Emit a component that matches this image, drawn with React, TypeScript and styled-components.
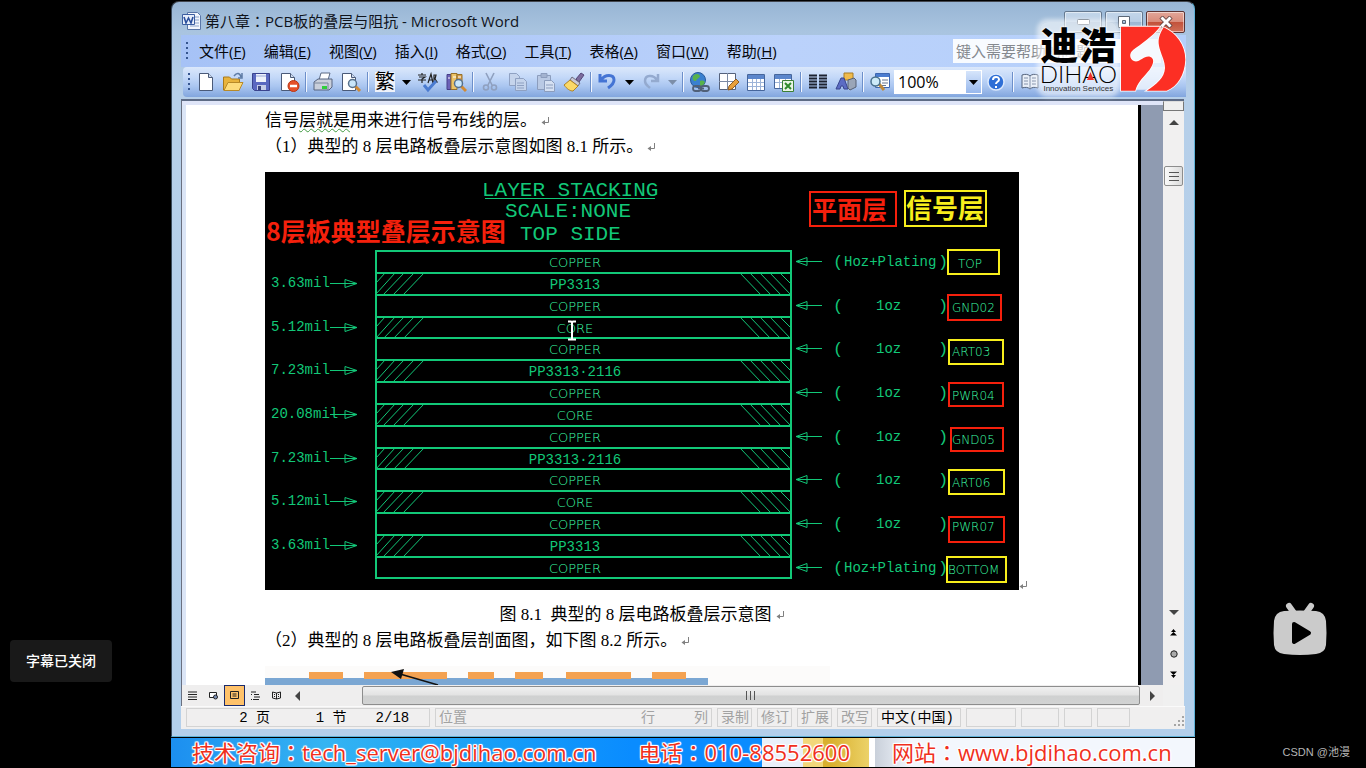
import React from 'react';
import styled, { createGlobalStyle, css } from 'styled-components';

const GREEN = '#12c878';
const BRIGHT = '#3dffa8';
const RED = '#f5200c';
const YELLOW = '#f7ee1c';
const ui = '"Open Sans", "Noto Sans CJK SC", sans-serif';
const serif = '"Liberation Serif", "Noto Sans CJK SC", serif';
const mono = '"Liberation Mono", "Noto Sans CJK SC", monospace';

const GlobalStyle = createGlobalStyle`
  *, *::before, *::after { box-sizing: border-box; }
  body { margin: 0; background: #000; font-family: ${ui}; }
  button, input, select { font-family: inherit; border-radius: 0; }
  p, h1 { margin: 0; font-weight: 400; }
`;

const Player = styled.div`
  display: grid;
  grid-template-columns: 171px minmax(0, 1fr) 171px;
  min-height: 100vh;
`;

const LeftSide = styled.aside`
  display: flex;
  flex-direction: column;
  justify-content: flex-end;
  align-items: flex-start;
  padding: 0 0 86px 10px;
`;

const Notice = styled.p`
  padding: 0 16px;
  line-height: 42px;
  font-size: 14px;
  font-weight: 500;
  color: #fff;
  background: #191919;
  border-radius: 4px;
`;

const RightSide = styled.aside`
  display: flex;
  flex-direction: column;
  justify-content: flex-end;
  align-items: flex-end;
  gap: 86px;
  padding: 0 16px 6px 0;
`;

const TvButton = styled.button`
  display: block;
  margin-right: 22px;
  padding: 0;
  border: 0;
  background: none;
  svg { display: block; }
`;

const Credit = styled.p`
  font-family: "Liberation Sans", "Noto Sans CJK SC", sans-serif;
  font-size: 11px;
  line-height: 20px;
  color: #b4b4b4;
`;

const Stage = styled.main`
  display: flex;
  flex-direction: column;
  padding: 1px 0;
`;

const Window = styled.section`
  position: relative;
  flex: 1;
  display: flex;
  flex-direction: column;
  margin-bottom: 1px;
  padding: 0 8px 7px 9px;
  border: 1px solid #5fb2d8;
  border-left-color: #3a4a5c;
  border-top-color: #42464e;
  border-radius: 8px 8px 0 0;
  background: linear-gradient(#98b5d4 0, #a9c4e0 30px, #b6cfe9 90px, #b3cfeb 100%);
`;

const TitleBar = styled.header`
  display: flex;
  align-items: center;
  gap: 3px;
  height: 33px;
  padding: 5px 1px 0 1px;
`;

const Title = styled.h1`
  flex: 1;
  font-size: 15px;
  line-height: 22px;
  color: #10141c;
`;

const Colon = styled.span`
  font-family: "Noto Sans CJK TC", sans-serif;
`;

const CaptionButton = styled.button<{ $close?: boolean }>`
  display: flex;
  align-items: center;
  justify-content: center;
  align-self: flex-start;
  width: ${p => (p.$close ? 39 : 38)}px;
  height: 22px;
  margin-top: 4px;
  padding: 0;
  border: 1px solid ${p => (p.$close ? '#5c3434' : '#64788f')};
  border-radius: 2px;
  box-shadow: inset 0 0 0 1px rgba(255, 255, 255, 0.5);
  background: ${p =>
    p.$close
      ? 'linear-gradient(#e2a699 0, #d98c7b 48%, #c2513a 50%, #cf6f58 100%)'
      : 'linear-gradient(#c3d6ea 0, #b8cde4 48%, #9cb6d2 50%, #aec6df 100%)'};
`;

const MenuBar = styled.nav`
  display: flex;
  align-items: center;
  gap: 2px;
  height: 32px;
  padding: 0 0 0 5px;
  background: linear-gradient(90deg, #a6c2f6, #bbd2fb 60%, #b4cffa);
`;

const Grip = styled.span`
  flex: none;
  width: 2px;
  height: 18px;
  margin-right: 1px;
  background: repeating-linear-gradient(#35558f 0 2px, transparent 2px 5px);
`;

const MenuItem = styled.button`
  padding: 0 8px;
  border: 0;
  background: none;
  font-size: 15px;
  line-height: 24px;
  white-space: nowrap;
  color: #05070c;
`;

const HelpBox = styled.input`
  width: 208px;
  height: 24px;
  margin: 0 25px 0 auto;
  padding: 0 3px;
  border: 0;
  background: #f8fbff;
  font-size: 15px;
  &::placeholder { color: #85898f; opacity: 1; }
`;

const ToolBar = styled.div`
  display: flex;
  align-items: center;
  height: 30px;
  padding: 0 0 0 5px;
  margin-left: 2px;
  border-radius: 4px 0 0 4px;
  background: linear-gradient(#dbe8fb 0, #c3d8f8 35%, #a9c5f0 65%, #82a6de 100%);
`;

const Tool = styled.button<{ $narrow?: boolean }>`
  display: flex;
  flex: none;
  align-items: center;
  justify-content: center;
  width: ${p => (p.$narrow ? 15 : 28)}px;
  height: 28px;
  padding: 0;
  border: 0;
  background: none;
`;

const Traditional = styled.span`
  width: 20px;
  font-size: 20px;
  line-height: 20px;
  background: #eef2fa;
  color: #000;
`;

const Separator = styled.span`
  flex: none;
  width: 2px;
  height: 20px;
  margin: 0 2px;
  border-left: 1px solid #6c8fca;
  border-right: 1px solid #f2f7ff;
`;

const Zoom = styled.div`
  display: flex;
  flex: none;
  width: 88px;
  height: 24px;
  border: 1px solid #fff;
  background: #fff;
`;

const ZoomSelect = styled.select`
  flex: 1;
  padding: 0 3px;
  border: 0;
  appearance: none;
  background: #fff;
  color: #000;
  font-size: 16px;
  line-height: 22px;
`;

const ZoomArrow = styled.span`
  display: flex;
  align-items: center;
  justify-content: center;
  width: 15px;
  background: linear-gradient(#d6e5fb, #98b8ec);
`;

const Workspace = styled.div`
  flex: 1;
  display: grid;
  grid-template-columns: minmax(0, 1fr) 21px;
  grid-template-rows: minmax(0, 1fr) 21px;
  margin: 2px 2px 0 0;
  border-top: 2px solid #5d6b85;
  border-left: 1px solid #6a7080;
  background: #f0f0f0;
`;

const Desk = styled.div`
  padding: 4px 22px 0 4px;
  overflow: hidden;
  background: linear-gradient(#dfe5f8 0 4px, transparent 4px),
    linear-gradient(90deg, #dbe5f6 0 4px, #8f9bb1 4px);
`;

const Page = styled.article`
  height: 100%;
  padding: 3px 119px 0 79px;
  border-right: 3px solid #000;
  background: #fff;
  overflow: hidden;
`;

const Line = styled.p<{ $center?: boolean }>`
  font-family: ${serif};
  font-size: 17px;
  line-height: 26px;
  color: #000;
  white-space: nowrap;
  text-align: ${p => (p.$center ? 'center' : 'left')};
  svg { margin-left: 4px; }
`;

const Wavy = styled.span`
  text-decoration: underline wavy #3f9a3f 1px;
  text-underline-offset: 2px;
`;

const Figure = styled.figure`
  display: flex;
  align-items: flex-end;
  margin: 12px -12px 12px 0;
  svg { flex: none; display: block; }
`;

const Section = styled.div`
  margin-top: 12px;
  svg { display: block; }
`;

const VBar = styled.div`
  display: flex;
  flex-direction: column;
  align-items: center;
  background: #f1f0f0;
`;

const VSplit = styled.div`
  width: 21px;
  height: 10px;
  border: 1px solid #777;
  border-top-color: #ddd;
  background: #efefef;
`;

const BarButton = styled.button<{ $h?: number; $w?: number; $on?: boolean }>`
  display: flex;
  flex: none;
  align-items: center;
  justify-content: center;
  width: ${p => p.$w || 21}px;
  height: ${p => p.$h || 21}px;
  padding: 0;
  border: ${p => (p.$on ? '1px solid #1a2a6c' : '0')};
  background: ${p => (p.$on ? '#ffc26a' : 'none')};
`;

const VThumb = styled.div`
  display: flex;
  align-items: center;
  justify-content: center;
  width: 19px;
  height: 20px;
  margin: 31px 0 auto;
  border: 1px solid #8d8d8d;
  border-radius: 2px;
  background: linear-gradient(90deg, #fafafa, #dcdcdc);
`;

const HBar = styled.div`
  display: flex;
  align-items: center;
  background: #efeeee;
`;

const HThumb = styled.div`
  flex: 1;
  display: flex;
  align-items: center;
  justify-content: center;
  height: 19px;
  margin-left: 54px;
  border: 1px solid #8d8d8d;
  border-radius: 2px;
  background: linear-gradient(#f0f0f0 0, #e2e2e2 48%, #cfd0d0 52%, #d2d3d3 100%);
`;

const Status = styled.footer`
  display: flex;
  align-items: center;
  gap: 5px;
  height: 23px;
  margin-right: 1px;
  padding: 1px 0 2px 5px;
  border-top: 1px solid #fafafa;
  background: #f0efef;
  font-family: ${mono};
  font-size: 14px;
  line-height: 18px;
`;

const Cell = styled.div<{ $w?: number; $dim?: boolean; $gap?: number; $end?: boolean }>`
  display: flex;
  align-items: center;
  gap: ${p => p.$gap || 0}px;
  height: 19px;
  white-space: nowrap;
  border: 1px solid #d3d3d3;
  color: ${p => (p.$dim ? '#a2a2a2' : '#000')};
  padding: 0 3px;
  ${p => (p.$w ? css`flex: none; width: ${p.$w}px;` : css`flex: 1;`)}
  ${p => p.$end && css`justify-content: flex-end;`}
`;

const Push = styled.span`
  margin-left: auto;
`;

const ResizeCorner = styled.span`
  flex: none;
  display: flex;
  width: 50px;
  align-self: flex-end;
  justify-content: flex-end;
`;

const Banner = styled.div`
  display: flex;
  align-items: flex-start;
  gap: 42px;
  height: 29px;
  padding-left: 21px;
  white-space: nowrap;
  font-size: 22px;
  line-height: 26px;
  color: #f0301c;
  text-shadow: 1px 0 #fff, -1px 0 #fff, 0 1px #fff, 0 -1px #fff, 1px 1px 1px #fff, -1px -1px 1px #fff,
    1px -1px 1px #fff, -1px 1px 1px #fff;
  background:
    linear-gradient(90deg, transparent 0 591px, #e9f0fa 591px 632px, #f2d77a 632px 652px, #d9b02e 652px 660px, #ecd268 698px, #fff 698px 704px, #c9d0da 704px, #f3f7fd 740px),
    linear-gradient(90deg, #1c8ff0, #35b4f2 15%, #18a0f6 30%, #0a8cff 45%);
`;

const Logo = styled.div`
  position: absolute;
  z-index: 2;
  top: 20px;
  right: 8px;
  display: flex;
  align-items: flex-start;
  gap: 3px;
  svg { display: block; }
`;

const LogoWords = styled.div`
  display: flex;
  flex-direction: column;
  align-items: center;
  color: #000;
  border-radius: 8px;
  background: rgba(255, 255, 255, 0.55);
  box-shadow: 0 0 4px 3px rgba(255, 255, 255, 0.55);
  white-space: nowrap;
`;

const LogoName = styled.span`
  font: 900 38px/42px "Noto Sans CJK SC", sans-serif;
  text-shadow: 0 0 2px #fff, 0 0 3px #fff;
`;

const LogoLatin = styled.span`
  display: flex;
  align-items: center;
  font: 300 24px/20px Lato, sans-serif;
`;

const LogoA = styled.span`
  position: relative;
  svg { position: absolute; left: 5px; bottom: 4px; }
`;

const LogoTag = styled.span`
  font: 400 8px/10px "Liberation Sans", sans-serif;
  color: #333;
`;

/* ---------- small glyphs ---------- */

const Caret = ({ color = '#000' }: { color?: string }) => (
  <svg width="9" height="5" viewBox="0 0 9 5"><path d="M0 0h9L4.500 5z" fill={color} /></svg>
);

const Triangle = ({ dir }: { dir: 'up' | 'down' | 'left' | 'right' }) => {
  const d = { up: 'M0 7L5 2l5 5z', down: 'M0 3l5 5 5-5z', left: 'M7 0L2 5l5 5z', right: 'M3 0l5 5-5 5z' }[dir];
  return <svg width="10" height="10" viewBox="0 0 10 10"><path d={d} fill="#444" /></svg>;
};

const Return = () => (
  <svg width="9" height="9" viewBox="0 0 9 9" fill="none" stroke="#808080">
    <path d="M7.500 0v5.500H2" /><path d="M4 3v5L0.500 5.500z" fill="#808080" stroke="none" />
  </svg>
);

const Sheet = ({ x = 5, y = 2 }: { x?: number; y?: number }) => (
  <g transform={`translate(${x} ${y})`}>
    <path d="M.5.5h9l4 4v13H.5z" fill="#fff" stroke="#4a5a78" />
    <path d="M9.500.5v4h4" fill="#cfdcf0" stroke="#4a5a78" />
  </g>
);

const Lens = ({ x, y }: { x: number; y: number }) => (
  <g transform={`translate(${x} ${y})`}>
    <path d="M7 7l5 5" stroke="#d08a35" strokeWidth="3" />
    <circle cx="4.500" cy="4.500" r="4" fill="#c9e6fa" stroke="#56708c" strokeWidth="1.500" />
  </g>
);

const icons: Record<string, React.ReactNode> = {
  new: <Sheet />,
  open: <>
    <path d="M1.500 19V6h6l2 2h8v11z" fill="#e8b33c" stroke="#a87a1c" />
    <path d="M2 19.500l4-8h15l-4 8z" fill="#fddc7c" stroke="#b88a28" />
    <path d="M12 5c3-4 6-3 7 1M20 2v5h-4" fill="none" stroke="#5d7ba5" strokeWidth="1.500" />
  </>,
  save: <>
    <path d="M2.500 2.500h17v17h-15l-2-2z" fill="#5a68c0" stroke="#3a448e" />
    <path d="M6 3h10v8H6z" fill="#eef2fb" /><path d="M6 5h10" stroke="#9aa8d8" />
    <path d="M7 14h9v5H7z" fill="#c6cde8" /><path d="M8 15h3v4H8z" fill="#39437e" />
  </>,
  permission: <>
    <Sheet x={3} />
    <circle cx="15.500" cy="15" r="5.500" fill="#e5502a" stroke="#b93614" />
    <path d="M12 15h7" stroke="#fff" strokeWidth="2.500" />
  </>,
  print: <>
    <path d="M7 9l2-7h9l-2 7z" fill="#fff" stroke="#5c6a84" />
    <path d="M2 11l4-3h14v8l-3 3H2z" fill="#c9cfdb" stroke="#566480" />
    <path d="M2 12h14v7" fill="none" stroke="#7b879c" />
    <path d="M10 15h5v3h-5z" fill="#2fcf3a" />
  </>,
  preview: <><Sheet x={2} /><Lens x={8} y={8} /></>,
  spelling: <>
    <path d="M1 4h8M5 2v2M2 6h6L5 8v4M1 9h8M11 12l3-9 2 9M12 9h4M17 11V4h2l-1 4 2 3z" fill="none" stroke="#222" strokeWidth="1.200" />
    <path d="M7 14l4 5 8-9" fill="none" stroke="#4a7bd0" strokeWidth="3" />
  </>,
  research: <>
    <path d="M2 3.500h4v15H2z" fill="#6c62b8" stroke="#463e88" /><path d="M6 2.500h6v16H6z" fill="#ecc368" stroke="#94702a" />
    <path d="M12 3.500h5v8h-5z" fill="#d9a04c" stroke="#94702a" /><path d="M3 7h2M8 6h3M13 6h3" stroke="#fff" />
    <Lens x={9} y={8} />
  </>,
  cut: <g fill="none" stroke="#8fa0bf" strokeWidth="1.600">
    <path d="M7 2l6 12M15 2L9 14" /><circle cx="7" cy="16.500" r="2.500" /><circle cx="15" cy="16.500" r="2.500" />
  </g>,
  copy: <g fill="#c5d4ec" stroke="#8fa1c2">
    <path d="M2.500 2.500h7l3 3v9h-10z" /><path d="M8.500 7.500h8l3 3v9h-11z" /><path d="M10 12h7M10 14.500h7M10 17h7" />
  </g>,
  paste: <g fill="#b9c9e4" stroke="#8c9dbd">
    <path d="M2.500 4.500h13v14h-13z" /><path d="M6 2.500h6v4H6z" fill="#a3b3d0" /><path d="M9.500 9.500h7l3 3v8h-10z" fill="#d5e0f2" />
    <path d="M11 14h7M11 17h7" />
  </g>,
  brush: <>
    <path d="M13 8l5-6 3 2-5 7z" fill="#7c6c9c" stroke="#55487a" />
    <path d="M9 6l8 6-2 3-8-6z" fill="#c9c9d6" stroke="#6e6e80" />
    <path d="M7 9l8 6-5 5c-3 0-6-2-9-6z" fill="#fbd968" stroke="#b08324" />
  </>,
  undo: <path d="M3 3v7h7M4 9c4-6 13-6 13 0 0 4-3 6-6 8" fill="none" stroke="#4474d4" strokeWidth="3" />,
  redo: <path d="M18 3v7h-7M17 9C13 3 5 4 5 10c0 4 3 5 5 7" fill="none" stroke="#94aacf" strokeWidth="2.500" />,
  globe: <>
    <circle cx="9" cy="9" r="7.500" fill="#3a80cf" stroke="#285a9c" />
    <path d="M4 5c3-3 6-2 7 0-1 3-3 2-4 5-3 0-4-2-3-5zM11 10c3-1 4 0 5 1-1 3-3 4-5 5z" fill="#58b24c" />
    <g fill="none" stroke="#506078" strokeWidth="1.800"><rect x="4" y="15" width="8" height="5" rx="2.500" /><rect x="12" y="15" width="8" height="5" rx="2.500" /><path d="M9 17.500h6" /></g>
  </>,
  drawTable: <>
    <path d="M2.500 2.500h16v16h-16z" fill="#fff" stroke="#55627c" /><path d="M2 10.500h17M10.500 2v17" stroke="#7c8aa4" />
    <path d="M11 19l1-4 7-7 3 3-7 7z" fill="#e8a03c" stroke="#905c20" />
  </>,
  table: <>
    <path d="M2.500 3.500h17v16h-17z" fill="#fff" stroke="#46669c" /><path d="M3 4h16v4H3z" fill="#5b86cc" />
    <path d="M3 11.500h16M3 15.500h16M7.500 8v11M11.500 8v11M15.500 8v11" stroke="#9db4d8" />
  </>,
  excel: <>
    <path d="M1.500 3.500h17v14h-17z" fill="#fff" stroke="#46669c" /><path d="M2 4h16v4H2z" fill="#5b86cc" />
    <path d="M2 11.500h16M6.500 8v9M12.500 8v9" stroke="#9db4d8" />
    <path d="M9.500 9.500h11v11h-11z" fill="#eaf5e6" stroke="#3b7f35" /><path d="M12 12l6 6M18 12l-6 6" stroke="#2f8a2c" strokeWidth="2" />
  </>,
  columns: <path d="M2 4.500h8M2 7.500h8M2 10.500h8M2 13.500h8M2 16.500h8M12 4.500h8M12 7.500h8M12 10.500h8M12 13.500h8M12 16.500h8" stroke="#1c2230" strokeWidth="2" />,
  drawing: <>
    <path d="M9 2h9v7H9z" fill="#f0bb4c" stroke="#a87c24" />
    <path d="M1 18L6 7h3l4 11h-4l-1-3H6l-1 3z" fill="#5c6cc4" stroke="#39458e" />
    <path d="M13 9l6-2 2 2v7l-6 3-2-2z" fill="#9aa5b7" stroke="#566074" />
  </>,
  docmap: <>
    <path d="M6.500 2.500h14v14h-14z" fill="#fff" stroke="#3d66b0" /><path d="M7 3h13v3H7z" fill="#4b7cd0" />
    <path d="M13 9h6M13 12h6M13 14.500h4" stroke="#66758e" />
    <path d="M10 13l5 6" stroke="#c08a3a" strokeWidth="3" /><circle cx="6.500" cy="10.500" r="4.500" fill="#cdeaf8" stroke="#48708c" strokeWidth="1.500" />
  </>,
  help: <>
    <circle cx="11" cy="11" r="8" fill="#2f6fd6" stroke="#dce9fc" strokeWidth="1.500" />
    <path d="M8 9c0-4 6-4 6-.5 0 2.500-3 2-3 4.500M11 15v2" fill="none" stroke="#fff" strokeWidth="2" />
  </>,
  read: <>
    <path d="M3 4c3-1 6-1 8 1 2-2 5-2 8-1v13c-3-1-6-1-8 1-2-2-5-2-8-1z" fill="#e9eff8" stroke="#53627c" />
    <path d="M11 5v13M5 7h4M5 10h4M5 13h4M13 7h4M13 10h4M13 13h4" stroke="#8492aa" />
  </>,
};

const Icon = ({ name }: { name: string }) => (
  <svg width="22" height="22" viewBox="0 0 22 22" aria-hidden="true">{icons[name]}</svg>
);

const tools = [
  'new:新建', 'open:打开', 'save:保存', 'permission:权限', '|', 'print:打印', 'preview:打印预览', '|', 'trad:繁', 'v',
  'spelling:拼写', 'research:信息检索', '|', 'cut:剪切', 'copy:复制', 'paste:粘贴', 'brush:格式刷', '|', 'undo:撤消', 'v',
  'redo:恢复', 'dim', '|', 'globe:超链接', 'drawTable:表格和边框', 'table:插入表格', 'excel:插入工作表', '|',
  'columns:分栏', 'drawing:绘图', '|', 'docmap:文档结构图',
];

const menus: [string, string][] = [
  ['文件', 'F'], ['编辑', 'E'], ['视图', 'V'], ['插入', 'I'], ['格式', 'O'], ['工具', 'T'], ['表格', 'A'], ['窗口', 'W'], ['帮助', 'H'],
];

/* ---------- layer stacking drawing ---------- */

const layers = [
  'COPPER', 'PP3313', 'COPPER', 'CORE', 'COPPER', 'PP3313·2116', 'COPPER', 'CORE', 'COPPER', 'PP3313·2116',
  'COPPER', 'CORE', 'COPPER', 'PP3313', 'COPPER',
];
const thickness = ['3.63mil', '5.12mil', '7.23mil', '20.08mil', '7.23mil', '5.12mil', '3.63mil'];
const nets = [
  { name: 'TOP', signal: true, x: 683, y: 78, w: 51, h: 24, tx: 693, ty: 96 },
  { name: 'GND02', signal: false, x: 683, y: 123, w: 53, h: 25, tx: 687, ty: 140 },
  { name: 'ART03', signal: true, x: 684, y: 168, w: 54, h: 24, tx: 687, ty: 184 },
  { name: 'PWR04', signal: false, x: 684, y: 211, w: 54, h: 23, tx: 687, ty: 228 },
  { name: 'GND05', signal: false, x: 686, y: 256, w: 52, h: 23, tx: 687, ty: 272 },
  { name: 'ART06', signal: true, x: 684, y: 298, w: 55, h: 24, tx: 687, ty: 315 },
  { name: 'PWR07', signal: false, x: 684, y: 345, w: 55, h: 25, tx: 687, ty: 359 },
  { name: 'BOTTOM', signal: true, x: 682, y: 385, w: 59, h: 25, tx: 683, ty: 402 },
];
const rowY = (i: number) => 79 + Math.round((i * 655) / 30);

const Cad = styled.text<{ $size: number; $mono?: boolean }>`
  font-family: ${p => (p.$mono ? '"Liberation Mono", monospace' : '"DejaVu Sans", sans-serif')};
  font-weight: 200;
  font-size: ${p => p.$size}px;
  fill: ${p => (p.$mono ? GREEN : BRIGHT)};
  white-space: pre;
`;

const Mark = styled.text<{ $signal?: boolean; $size: number }>`
  font: 700 ${p => p.$size}px "Noto Sans CJK SC", sans-serif;
  fill: ${p => (p.$signal ? YELLOW : RED)};
`;

const StackDrawing = () => (
  <svg width="754" height="418" viewBox="0 0 754 418" role="img" aria-label="8层板典型叠层示意图">
    <rect width="754" height="418" fill="#000" />
    <Cad $mono $size={21} x="217" y="24">LAYER STACKING</Cad>
    <path d="M220 26.500h170" stroke={GREEN} />
    <Cad $mono $size={21} x="240" y="45">SCALE:NONE</Cad>
    <Cad $mono $size={21} x="255" y="68">TOP SIDE</Cad>
    <Mark $size={25} x="1" y="69">8层板典型叠层示意图</Mark>
    <g fill="none" strokeWidth="2">
      <rect x="545" y="20" width="86" height="34" stroke={RED} />
      <rect x="640" y="19" width="81" height="35" stroke={YELLOW} />
    </g>
    <Mark $size={25} x="547" y="47">平面层</Mark>
    <Mark $size={26} $signal x="641" y="46">信号层</Mark>
    <g fill="none" stroke={GREEN}>
      <rect x="111" y="79" width="415" height="327" strokeWidth="2" />
      {layers.map((_, i) => i > 0 && <path key={i} d={`M111 ${rowY(i)}h415`} strokeWidth="2" />)}
      {[1, 3, 5, 7, 9, 11, 13].map(i => {
        const y = rowY(i);
        return (
          <g key={i}>
            <path d={`M120 ${y}l-9 10M130 ${y}l-19 21M139 ${y}l-21 22M149 ${y}l-21 22M159 ${y}l-21 22`} />
            <path d={`M475 ${y}l21 22M485 ${y}l21 22M495 ${y}l21 22M505 ${y}l21 22M515 ${y}l11 11`} />
            <path d={`M65 ${y + 10.5}h27M80 ${y + 6.5}v8l12 -4z`} />
          </g>
        );
      })}
      {nets.map((n, i) => {
        const y = rowY(i * 2) + 10.5;
        return <path key={n.name} d={`M531 ${y}h26M542 ${y - 4}v8l-11 -4z`} />;
      })}
    </g>
    {layers.map((label, i) => (
      <Cad key={i} $size={label[0] === 'C' ? 13 : 14} $mono={label[0] === 'P'} x="310" y={rowY(i) + 16} textAnchor="middle">{label}</Cad>
    ))}
    {thickness.map((t, i) => (
      <Cad key={i} $mono $size={14} x="6" y={rowY(i * 2 + 1) + 14}>{t}</Cad>
    ))}
    {nets.map((n, i) => {
      const y = rowY(i * 2) + 15;
      const outer = i === 0 || i === nets.length - 1;
      return (
        <g key={n.name}>
          <Cad $mono $size={17} x="568" y={y + 1}>(</Cad>
          <Cad $mono $size={14} x={outer ? 579 : 611} y={y}>{outer ? 'Hoz+Plating' : '1oz'}</Cad>
          <Cad $mono $size={17} x="673" y={y + 1}>)</Cad>
          <rect x={n.x} y={n.y} width={n.w} height={n.h} fill="none" strokeWidth="2" stroke={n.signal ? YELLOW : RED} />
          <Cad $size={12} x={n.tx} y={n.ty}>{n.name}</Cad>
        </g>
      );
    })}
    <path d="M303 149.500h3l1 1 1 -1h3M307 150v17M303 167.500h8" fill="none" stroke="#fff" strokeWidth="2" />
  </svg>
);

const SectionDrawing = () => (
  <svg width="565" height="19" viewBox="0 0 565 19" role="img" aria-label="剖面图">
    <rect width="565" height="19" fill="#fcfbfa" />
    <rect y="12" width="443" height="7" fill="#7ba7d3" />
    {[[44, 34], [99, 83], [203, 26], [250, 28], [301, 65], [387, 34]].map(([x, w]) => (
      <rect key={x} x={x} y="6" width={w} height="7" fill="#f4a251" />
    ))}
    <path d="M135 8l38 11" stroke="#111" strokeWidth="1.500" />
    <path d="M126 6l13 -3-3 10z" fill="#111" />
  </svg>
);

const WordIcon = () => (
  <svg width="20" height="20" viewBox="0 0 20 20" aria-hidden="true">
    <path d="M5.500 1.500h10l3 3v14h-13z" fill="#f2f6fd" stroke="#5a76a8" />
    <path d="M13 6h4M13 9h4M13 12h4M8 15h9" stroke="#8ba2c8" />
    <path d="M.5 3.500h12v10H.5z" fill="#e8effb" stroke="#3c5ea0" />
    <path d="M2 6l2 6 2.500-5L9 12l2-6" fill="none" stroke="#2a4f9c" strokeWidth="1.600" />
  </svg>
);

const App = () => (
  <>
    <GlobalStyle />
    <Player>
      <LeftSide><Notice>字幕已关闭</Notice></LeftSide>
      <Stage>
        <Window>
          <TitleBar>
            <WordIcon />
            <Title>第八章<Colon>：</Colon>PCB板的叠层与阻抗 - Microsoft Word</Title>
            <CaptionButton aria-label="最小化">
              <svg width="13" height="6" viewBox="0 0 13 6"><rect x=".5" y=".5" width="12" height="5" rx="1" fill="#fff" stroke="#5b6776" /></svg>
            </CaptionButton>
            <CaptionButton aria-label="最大化">
              <svg width="12" height="12" viewBox="0 0 12 12"><path d="M.5.500h11v11H.5zM4.500 4.500h3v3h-3z" fill="#fff" fillRule="evenodd" stroke="#5b6776" /></svg>
            </CaptionButton>
            <CaptionButton $close aria-label="关闭">
              <svg width="14" height="12" viewBox="0 0 14 12"><path d="M2 1l10 10M12 1L2 11" stroke="#5c4040" strokeWidth="4.500" /><path d="M2.500 1.500l9 9M11.500 1.500l-9 9" stroke="#fff" strokeWidth="3" /></svg>
            </CaptionButton>
          </TitleBar>
          <MenuBar>
            <Grip />
            {menus.map(([name, key]) => <MenuItem key={key}>{name}(<u>{key}</u>)</MenuItem>)}
            <HelpBox aria-label="帮助" placeholder="键入需要帮助的问题" />
          </MenuBar>
          <ToolBar>
            <Grip />
            {tools.map((t, i) => {
              if (t === '|') return <Separator key={i} />;
              if (t === 'v' || t === 'dim') return <Tool key={i} $narrow aria-label="更多"><Caret color={t === 'dim' ? '#7c8ea8' : '#000'} /></Tool>;
              const [name, label] = t.split(':');
              return <Tool key={i} aria-label={label}>{name === 'trad' ? <Traditional>繁</Traditional> : <Icon name={name} />}</Tool>;
            })}
            <Zoom>
              <ZoomSelect aria-label="显示比例" defaultValue="100%"><option>100%</option></ZoomSelect>
              <ZoomArrow><Caret /></ZoomArrow>
            </Zoom>
            <Tool aria-label="帮助"><Icon name="help" /></Tool>
            <Separator />
            <Tool aria-label="阅读"><Icon name="read" /></Tool>
          </ToolBar>
          <Workspace>
            <Desk>
              <Page>
                <Line>信号<Wavy>层就是</Wavy>用来进行信号布线的层。<Return /></Line>
                <Line>（1）典型的 8 层电路板叠层示意图如图 8.1 所示。<Return /></Line>
                <Figure><StackDrawing /><Return /></Figure>
                <Line $center>图 8.1&nbsp; 典型的 8 层电路板叠层示意图<Return /></Line>
                <Line>（2）典型的 8 层电路板叠层剖面图，如下图 8.2 所示。<Return /></Line>
                <Section><SectionDrawing /></Section>
              </Page>
            </Desk>
            <VBar>
              <VSplit />
              <BarButton $h={24} aria-label="向上滚动"><Triangle dir="up" /></BarButton>
              <VThumb><svg width="10" height="9" viewBox="0 0 10 9"><path d="M0 .5h10M0 4.500h10M0 8.500h10" stroke="#555" /></svg></VThumb>
              <BarButton aria-label="向下滚动"><Triangle dir="down" /></BarButton>
              <BarButton aria-label="前一页"><svg width="7" height="7" viewBox="0 0 7 7"><path d="M3.500 0L6 3H1zM3.500 3L7 6.500H0z" /></svg></BarButton>
              <BarButton aria-label="选择浏览对象"><svg width="8" height="8" viewBox="0 0 8 8"><circle cx="4" cy="4" r="3.200" fill="#aaa" stroke="#222" /></svg></BarButton>
              <BarButton aria-label="下一页"><svg width="7" height="7" viewBox="0 0 7 7"><path d="M0 .5h7L3.500 4zM1 4h5L3.500 7z" /></svg></BarButton>
            </VBar>
            <HBar>
              <BarButton aria-label="普通视图"><svg width="9" height="9" viewBox="0 0 9 9"><path d="M0 1h9M0 3.500h9M0 6h9M0 8.500h9" stroke="#222" /></svg></BarButton>
              <BarButton aria-label="Web 版式视图"><svg width="9" height="9" viewBox="0 0 9 9"><path d="M.5 1.500h7v5h-7z" fill="#fff" stroke="#222" /><circle cx="6.500" cy="6" r="2" fill="#7d90b8" stroke="#222" /></svg></BarButton>
              <BarButton $on aria-label="页面视图"><svg width="9" height="9" viewBox="0 0 9 9"><path d="M.5.500h8v7h-8zM2.500 3h4M2.500 5h4" fill="none" stroke="#222" /></svg></BarButton>
              <BarButton aria-label="大纲视图"><svg width="9" height="9" viewBox="0 0 9 9"><path d="M0 1h5M3 3.500h5M3 6h6M2 8.500h6M0 3.500h1M0 8.500h1" stroke="#222" /></svg></BarButton>
              <BarButton aria-label="阅读版式"><svg width="9" height="9" viewBox="0 0 9 9"><path d="M.5 1l4 1 4-1v6l-4 1-4-1zM4.500 2v6M2 3.500h1M2 5.500h1M6 3.500h1M6 5.500h1" fill="none" stroke="#222" /></svg></BarButton>
              <BarButton aria-label="向左滚动"><Triangle dir="left" /></BarButton>
              <HThumb><svg width="10" height="9" viewBox="0 0 10 9"><path d="M.5 0v9M4.500 0v9M8.500 0v9" stroke="#555" /></svg></HThumb>
              <BarButton $w={23} aria-label="向右滚动"><Triangle dir="right" /></BarButton>
            </HBar>
          </Workspace>
          <Status>
            <Cell $w={244} $end $gap={29}>
              <span>2 页</span><span>&nbsp; 1 节</span><span>2/18 &nbsp;</span>
            </Cell>
            <Cell $dim $gap={39}><span>位置</span><Push>行</Push><span>列</span></Cell>
            {['录制', '修订', '扩展', '改写'].map(s => <Cell key={s} $dim $w={35}>{s}</Cell>)}
            <Cell $w={84}>中文(中国)</Cell>
            <Cell $w={50} /><Cell $w={38} /><Cell $w={28} /><Cell $w={33} />
            <ResizeCorner>
              <svg width="11" height="11" viewBox="0 0 11 11"><path d="M8 0h2v2H8zM8 4h2v2H8zM8 8h2v2H8zM4 4h2v2H4zM4 8h2v2H4zM0 8h2v2H0z" fill="#a5a5a5" /></svg>
            </ResizeCorner>
          </Status>
          <Logo>
            <LogoWords>
              <LogoName>迪浩</LogoName>
              <LogoLatin>
                DIH
                <LogoA>
                  A
                  <svg width="7" height="8" viewBox="0 0 7 8" aria-hidden="true"><path d="M3.500 0L7 8H0z" fill="#f03028" /></svg>
                </LogoA>
                O
              </LogoLatin>
              <LogoTag>Innovation Services</LogoTag>
            </LogoWords>
            <svg width="66" height="72" viewBox="32 12 198 216" aria-hidden="true">
              <path d="M152 28H168L170 215H78C60 160 60 130 60 100Z" fill="#f4f8fe" opacity="0.75" />
              <g fill="#fc2f24" stroke="#fff" strokeWidth="5" paintOrder="stroke">
                <path d="M35 26H152C130 55 95 78 72 95C58 105 60 124 76 130C92 133 104 112 122 116C140 122 130 145 115 162C98 182 84 195 78 218H35Z" />
                <path d="M163 28C200 45 228 80 228 125C226 170 205 205 172 218H112C140 200 166 180 167 150C167 130 158 115 153 98C147 78 142 62 163 28Z" />
              </g>
            </svg>
          </Logo>
        </Window>
        <Banner>
          <span>技术咨询<Colon>：</Colon>tech_server@bjdihao.com.cn</span>
          <span>电话<Colon>：</Colon>010-88552600</span>
          <span>网站<Colon>：</Colon>www.bjdihao.com.cn</span>
        </Banner>
      </Stage>
      <RightSide>
        <TvButton aria-label="播放">
          <svg width="56" height="54" viewBox="0 0 56 54">
            <path d="M17 4l5 7M39 4l-5 7" stroke="#cbcbcb" strokeWidth="6" strokeLinecap="round" />
            <path d="M12 9Q28 8 44 9Q53 10 54 19Q55 31 54 43Q53 51 44 52Q28 54 12 52Q3 51 2 43Q1 31 2 19Q3 10 12 9Z" fill="#cbcbcb" />
            <path d="M22 22L37 31L22 40Z" fill="#000" stroke="#000" strokeWidth="4" strokeLinejoin="round" />
          </svg>
        </TvButton>
        <Credit>CSDN @池漫</Credit>
      </RightSide>
    </Player>
  </>
);

export default App;
